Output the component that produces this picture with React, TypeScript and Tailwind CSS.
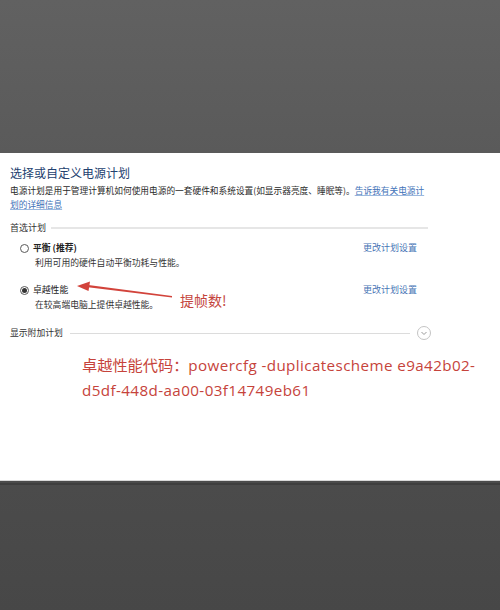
export default function App() {
  const ui = { fontFamily: '"Noto Sans CJK SC", "Noto Sans", sans-serif' };
  const code = { fontFamily: '"Open Sans", "Noto Sans CJK SC", sans-serif' };

  return (
    <div className="flex h-[610px] w-[500px] flex-col overflow-hidden" style={ui}>
      {/* top dim band */}
      <div className="h-[153px] bg-gradient-to-b from-[#616161] to-[#5a5a5a]" />

      {/* control panel capture */}
      <div className="relative h-[327px] bg-white pl-[10px] pt-[12px]">
        <h1 className="text-[12px] leading-[16px] text-[#23416f]">选择或自定义电源计划</h1>

        <p className="mt-[3px] w-[420px] text-[8.7px] leading-[14px] text-[#2a2a2a]">
          电源计划是用于管理计算机如何使用电源的一套硬件和系统设置(如显示器亮度、睡眠等)。
          <span className="text-[#3f72b8] underline decoration-[#9bb8de]">告诉我有关电源计划的详细信息</span>
        </p>

        <div className="mt-[9px] flex w-[418px] items-center gap-[5px]">
          <span className="text-[9px] leading-[14px] text-[#333]">首选计划</span>
          <div className="h-[2px] flex-1 bg-[#e6e6e6]" />
        </div>

        {/* plan: balanced */}
        <div className="mt-[6px] flex">
          <div className="w-[353px]">
            <div className="flex items-center gap-[4px] pl-[10px]">
              <span className="h-[9px] w-[9px] rounded-full border border-[#5a5a5a] bg-white" />
              <span className="text-[8.8px] font-bold leading-[14px] text-[#222]">平衡 (推荐)</span>
            </div>
            <div className="mt-[1px] pl-[25px] text-[8.8px] leading-[14px] text-[#333]">
              利用可用的硬件自动平衡功耗与性能。
            </div>
          </div>
          <span className="text-[9px] leading-[14px] text-[#4775b5]">更改计划设置</span>
        </div>

        {/* plan: ultimate performance */}
        <div className="mt-[13px] flex">
          <div className="w-[353px]">
            <div className="flex items-center gap-[4px] pl-[10px]">
              <span className="flex h-[9px] w-[9px] items-center justify-center rounded-full border border-[#5a5a5a] bg-white">
                <span className="h-[5px] w-[5px] rounded-full bg-[#333]" />
              </span>
              <span className="text-[8.8px] leading-[14px] text-[#222]">卓越性能</span>
            </div>
            <div className="mt-[1px] pl-[25px] text-[8.8px] leading-[14px] text-[#333]">
              在较高端电脑上提供卓越性能。
            </div>
          </div>
          <span className="text-[9px] leading-[14px] text-[#4775b5]">更改计划设置</span>
        </div>

        <div className="mt-[14px] flex w-[421px] items-center gap-[7px]">
          <span className="text-[8.8px] leading-[14px] text-[#333]">显示附加计划</span>
          <div className="h-px flex-1 bg-[#dcdcdc]" />
          <span className="flex h-[14px] w-[14px] items-center justify-center rounded-full border border-[#c4c4c4]">
            <svg width="8" height="8" viewBox="0 0 8 8" fill="none">
              <path d="M1.5 3 L4 5.5 L6.5 3" stroke="#9a9a9a" strokeWidth="1" />
            </svg>
          </span>
        </div>

        <p className="mt-[13px] pl-[72px] text-[15.2px] leading-[25px] text-[#c6433b]" style={code}>
          卓越性能代码：<span className="tracking-[0.4px]">powercfg -duplicatescheme e9a42b02-</span>
          <br />
          <span className="tracking-[0.4px]">d5df-448d-aa00-03f14749eb61</span>
        </p>

        {/* red annotation over the screenshot */}
        <svg className="absolute left-0 top-0" width="500" height="327" viewBox="0 0 500 327">
          <path d="M172 144.5 L88 134.2 L88.3 132 L172 143 Z" fill="#d2433b" />
          <path d="M77 133 L90 128.5 L88.5 138 Z" fill="#d2433b" />
        </svg>
        <span className="absolute left-[180px] top-[137px] text-[14px] leading-[20px] text-[#c4453d]">
          提帧数!
        </span>
      </div>

      {/* bottom dim band */}
      <div className="h-px bg-[#d8d8d8]" />
      <div className="h-[2px] bg-[#4b4b4b]" />
      <div className="h-[2px] bg-[#3e3e3e]" />
      <div className="flex-1 bg-gradient-to-b from-[#4b4b4b] to-[#474747]" />
    </div>
  );
}
